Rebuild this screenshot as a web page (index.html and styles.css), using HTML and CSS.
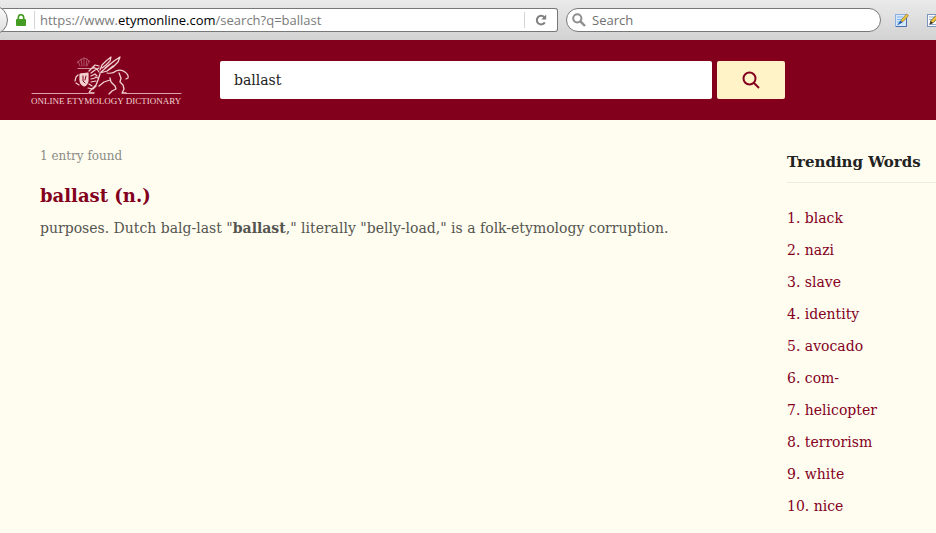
FILE: index.html
```
<!DOCTYPE html>
<html lang="en">
  <head>
    <meta charset="UTF-8" />
    <meta name="viewport" content="width=device-width, initial-scale=1.0" />
    <title>ballast | Online Etymology Dictionary</title>
    <link rel="stylesheet" href="styles.css">
  </head>
  <body>
    <div class="toolbar">
      <button class="back-button" type="button" aria-label="Back"></button>
      <div class="url-bar">
        <svg class="lock" viewBox="0 0 10 12" width="10" height="12" aria-hidden="true">
          <path d="M2.3 6V3.4a2.7 2.7 0 0 1 5.4 0V6" fill="none" stroke="#459c22" stroke-width="1.7" />
          <rect y="5" width="10" height="7" rx="1" fill="#459c22" />
        </svg>
        <div class="url">https://www.<span>etymonline.com</span>/search?q=ballast</div>
        <button class="reload" type="button" aria-label="Reload">
          <svg viewBox="0 0 12 12" width="12" height="12" aria-hidden="true">
            <path d="M9.3 3.2A4.3 4.3 0 1 0 9.8 8.4" fill="none" stroke="#808080" stroke-width="2" />
            <path d="M11.2.6v5H6.3z" fill="#808080" />
          </svg>
        </button>
      </div>
      <label class="browser-search">
        <svg viewBox="0 0 14 14" width="14" height="14" aria-hidden="true">
          <circle cx="5.3" cy="5.3" r="4.1" fill="none" stroke="#8e8e8e" stroke-width="2" />
          <path d="M8.4 8.4l4.6 4.6" stroke="#8e8e8e" stroke-width="2.4" />
        </svg>
        <input type="text" placeholder="Search" aria-label="Browser search" />
      </label>
      <div class="addons">
        <button type="button" aria-label="Edit page">
          <svg viewBox="0 0 15 15" width="15" height="15" aria-hidden="true">
            <rect x="1.5" y="1.5" width="11" height="12" fill="#d5e8fc" stroke="#8fb0dc" />
            <path d="M12.5 5v8.500H2" fill="none" stroke="#4a6ea8" />
            <path d="M3 4h6M3 6.500h5M3 9h3" stroke="#83b4ed" />
            <path d="M6.500 9l.7-2L12.500 1l2 1.600L9 8.700z" fill="#efc43a" stroke="#776332" stroke-width=".6" />
            <path d="M3 12.500l3.300-5 2.300 2z" fill="#2463b5" />
          </svg>
        </button>
        <button type="button" aria-label="Edit text">
          <svg viewBox="0 0 15 15" width="15" height="15" aria-hidden="true">
            <rect x="1.500" y="1.500" width="11" height="12" fill="#f8faff" stroke="#7994bb" />
            <path d="M3 4h6M3 6.500h4M3 11.500h7" stroke="#92a9ce" />
            <path d="M4 11l1-3.500 6.500-6.500 2 2L7.500 9.500z" fill="#efc43a" stroke="#6b5a32" stroke-width=".8" />
            <path d="M3.500 11.500l1.300-3.500 2 2z" fill="#333" />
          </svg>
        </button>
      </div>
    </div>

    <header>
      <a class="logo" href="#" aria-label="Online Etymology Dictionary">
        <svg viewBox="0 0 152 51" width="152" height="51" aria-hidden="true">
          <g fill="none" stroke="#f3d3d2" stroke-width="1.200" stroke-linecap="round" stroke-linejoin="round">
            <path d="M1 38.500h56M95 38.500h55" stroke="#dca4ac" stroke-width="1" />
            <!-- crown -->
            <path d="M47 6l2 5M50 4l1 7M53 3v8M56 4l-1 7M58 6l-2 5M46 8l2-2 3-2 2-1 3 1 3 3" stroke="#b9687a" stroke-width=".8" />
            <path d="M47 13.500h16" stroke="#cf8f9a" />
            <!-- shield -->
            <path d="M49 19l8-1v8q-1 4-4 5-4-2-4-6z" fill="#f3d3d2" />
            <path d="M52 21v5l2 2M55 21l-1 4" stroke="#83001d" stroke-width="1" />
            <!-- forelegs -->
            <path d="M47 20l-2 2-1 4M45 28l3 2M57 33l5 1 3-3M58 29l3 2" />
            <!-- head and mane -->
            <path d="M58 16l3-3 3-3 4 1M60 18l4-3 4-2M62 12l4 2 2 3M60 21l4-2 2 2M60 24l4-1M60 27l5-1M64 22l3 1" />
            <!-- wing -->
            <path d="M69 15l2-5 4-4 5-4-1 4-4 4-4 3" />
            <path d="M70 17l7-6 6-5 6-4-2 5-5 5-6 4-7 2M74 13l5-4M76 16l6-5" stroke-width="1.300" />
            <!-- back and tail -->
            <path d="M76 18q6 1 9-2 5-2 9 1 4 3 3 6l-2 1" />
            <!-- chest and legs -->
            <path d="M69 19l-2 6-2 5-6 6-1 2h5M68 31l5-4 6-2M79 23l1 4 4 4 1 3-4 2-3 3M88 18l2 5-1 4 3 3 1 4-2 4 4 0" stroke-width="1.300" />
          </g>
          <text x="0" y="49" class="logo-text">ONLINE ETYMOLOGY DICTIONARY</text>
        </svg>
      </a>
      <form class="search-form">
        <input type="text" name="q" value="ballast" aria-label="Search the dictionary" />
        <button type="submit" aria-label="Search">
          <svg viewBox="0 0 18 18" width="18" height="18" aria-hidden="true">
            <circle cx="7.500" cy="7.500" r="6" fill="none" stroke="#83001d" stroke-width="2" />
            <path d="M12 12l5 5" stroke="#83001d" stroke-width="2" />
          </svg>
        </button>
      </form>
    </header>

    <main>
      <section class="results">
        <p class="count">1 entry found</p>
        <h1><a href="#">ballast (n.)</a></h1>
        <p class="entry">purposes. Dutch balg-last "<b>ballast</b>," literally "belly-load," is a folk-etymology corruption.</p>
      </section>
      <aside class="trending">
        <h2>Trending Words</h2>
        <ul>
          <li><a href="#">1. black</a></li>
          <li><a href="#">2. nazi</a></li>
          <li><a href="#">3. slave</a></li>
          <li><a href="#">4. identity</a></li>
          <li><a href="#">5. avocado</a></li>
          <li><a href="#">6. com-</a></li>
          <li><a href="#">7. helicopter</a></li>
          <li><a href="#">8. terrorism</a></li>
          <li><a href="#">9. white</a></li>
          <li><a href="#">10. nice</a></li>
        </ul>
      </aside>
    </main>
  </body>
</html>
```
FILE: styles.css
```
* {
  box-sizing: border-box;
}
body {
  margin: 0;
  background-color: #fffdf0;
  font-family: "DejaVu Serif", serif;
  overflow-x: hidden;
}
button {
  padding: 0;
  border: none;
  background: none;
}
input {
  min-width: 0;
  border: none;
  outline: none;
}
a {
  color: #83001d;
  text-decoration: none;
}
svg {
  display: block;
}

.toolbar {
  position: relative;
  display: flex;
  align-items: center;
  gap: 8px;
  height: 40px;
  overflow: hidden;
  background: linear-gradient(#eaeaea, #d2d2d2);
  font-family: "Open Sans", sans-serif;
  font-size: 13px;
}

.back-button {
  position: absolute;
  left: -22px;
  top: 5px;
  width: 30px;
  height: 30px;
  border: 1px solid #777;
  border-radius: 50%;
  background: linear-gradient(#fbfbfb, #dedede);
}

.url-bar {
  display: flex;
  flex: 1;
  align-items: center;
  height: 24px;
  padding-left: 16px;
  border: 1px solid #777;
  border-left: none;
  border-radius: 0 3px 3px 0;
  background-color: #fff;
}

.url {
  flex: 1;
  margin-left: 8px;
  padding-left: 5px;
  border-left: 1px solid #d5d5d5;
  color: #7b7b7b;
}

.url span {
  color: #000;
}

.reload {
  display: flex;
  align-items: center;
  justify-content: center;
  width: 33px;
  height: 16px;
  border-left: 1px solid #d5d5d5;
}

.browser-search {
  display: flex;
  align-items: center;
  gap: 6px;
  width: 315px;
  height: 24px;
  padding: 0 12px 0 5px;
  border: 1px solid #777;
  border-radius: 12px;
  background-color: #fff;
}

.browser-search input {
  flex: 1;
  padding: 0;
  background: none;
  font: inherit;
}

.browser-search input::placeholder {
  color: #707070;
}

.addons {
  display: flex;
  gap: 17px;
  width: 47px;
  padding-left: 5px;
}

.addons button {
  flex: none;
}

header {
  display: flex;
  align-items: center;
  height: 80px;
  padding: 0 151px 0 31px;
  background-color: #83001d;
}

.logo {
  width: 189px;
}

.logo-text {
  fill: #f3d3d2;
  font-family: "Liberation Serif", serif;
  font-size: 9px;
}

.search-form {
  display: flex;
  flex: 1;
  gap: 5px;
}

.search-form input {
  flex: 1;
  height: 38px;
  padding: 0 14px;
  border-radius: 2px;
  background-color: #fff;
  color: #222;
  font-family: inherit;
  font-size: 14px;
}

.search-form button {
  display: flex;
  align-items: center;
  justify-content: center;
  width: 68px;
  height: 38px;
  border-radius: 2px;
  background-color: #fff3c7;
}

main {
  display: flex;
  padding-left: 40px;
}

.results {
  flex: 1;
  padding-top: 24px;
}

.count {
  margin: 0;
  color: #8b8b86;
  font-size: 12px;
  line-height: 24px;
}

h1 {
  margin: 12px 0 0;
  font-size: 18px;
  line-height: 32px;
}

.entry {
  margin: 4px 0 0;
  color: #555550;
  font-size: 14px;
  line-height: 24px;
}

.trending {
  width: 149px;
  padding-top: 24px;
}

h2 {
  margin: 0;
  padding: 6px 0 8px;
  border-bottom: 1px solid #ececdf;
  color: #222;
  font-size: 15px;
  line-height: 24px;
}

.trending ul {
  margin: 19px 0 0;
  padding: 0;
  list-style: none;
}

.trending li {
  font-size: 14px;
  line-height: 32px;
}
```
